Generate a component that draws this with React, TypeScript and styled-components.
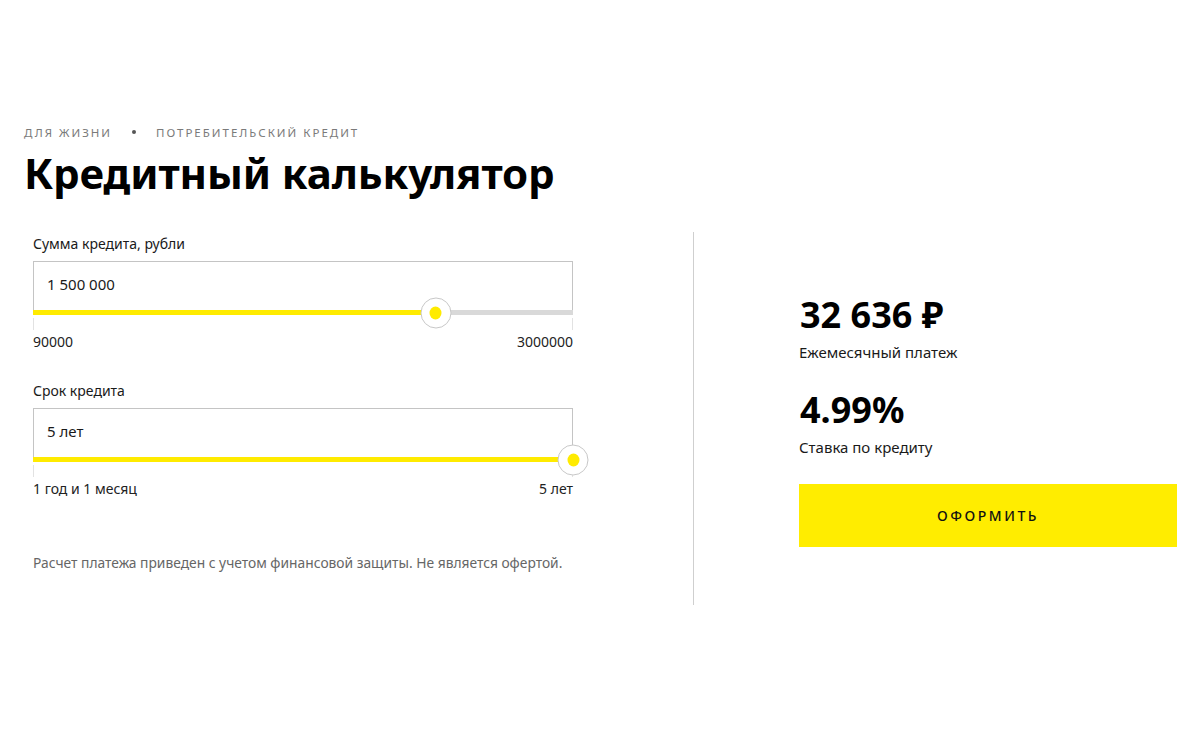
import React from "react";
import styled, { createGlobalStyle } from "styled-components";

const GlobalStyle = createGlobalStyle`
    html, body {
        margin: 0;
        padding: 0;
        background: #fff;
        font-family: "Noto Sans", "Open Sans", sans-serif;
        color: #111;
    }
`;

type SliderField = {
    label: string,
    value: string,
    min: string,
    max: string,
    fraction: number
};

const fields: SliderField[] = [
    { label: "Сумма кредита, рубли", value: "1 500 000", min: "90000", max: "3000000", fraction: 0.746 },
    { label: "Срок кредита", value: "5 лет", min: "1 год и 1 месяц", max: "5 лет", fraction: 1 }
];

export default () => {
    return (
        <Page>
            <GlobalStyle/>
            <Breadcrumbs>
                <Crumb>Для жизни</Crumb>
                <Dot/>
                <Crumb>Потребительский кредит</Crumb>
            </Breadcrumbs>
            <Title>Кредитный калькулятор</Title>
            <Main>
                <Form>
                    {fields.map(f => (
                        <Field key={f.label}>
                            <Label>{f.label}</Label>
                            <InputBox>
                                <Value>{f.value}</Value>
                                <Track>
                                    <Fill style={{ width: `${f.fraction * 100}%` }}/>
                                    <Thumb style={{ left: `${f.fraction * 100}%` }}>
                                        <ThumbDot/>
                                    </Thumb>
                                </Track>
                            </InputBox>
                            <Ticks/>
                            <Range>
                                <span>{f.min}</span>
                                <span>{f.max}</span>
                            </Range>
                        </Field>
                    ))}
                    <Note>Расчет платежа приведен с учетом финансовой защиты. Не является офертой.</Note>
                </Form>
                <Divider/>
                <Summary>
                    <Stat>
                        <BigNumber>32 636 ₽</BigNumber>
                        <Caption>Ежемесячный платеж</Caption>
                    </Stat>
                    <Stat>
                        <BigNumber>4.99%</BigNumber>
                        <Caption>Ставка по кредиту</Caption>
                    </Stat>
                    <ApplyButton>Оформить</ApplyButton>
                </Summary>
            </Main>
        </Page>
    );
};

const Page = styled.div`
    width: 1200px;
    height: 738px;
    box-sizing: border-box;
    padding: 125px 0 0 24px;
`;

const Breadcrumbs = styled.div`
    display: flex;
    align-items: center;
    gap: 20px;
    height: 14px;
`;

const Crumb = styled.span`
    font-size: 11.5px;
    letter-spacing: 2px;
    text-transform: uppercase;
    color: #7a7a7a;
`;

const Dot = styled.span`
    width: 4px;
    height: 4px;
    border-radius: 50%;
    background: #555;
`;

const Title = styled.h1`
    margin: 8px 0 0;
    font-size: 42px;
    line-height: 52px;
    font-weight: 700;
    color: #000;
    letter-spacing: -0.1px;
`;

const Main = styled.div`
    display: flex;
    align-items: stretch;
    margin: 33px 0 0 9px;
`;

const Form = styled.div`
    width: 540px;
    padding-top: 3px;
    display: flex;
    flex-direction: column;
`;

const Field = styled.div`
    display: flex;
    flex-direction: column;
    margin-bottom: 31px;
`;

const Label = styled.div`
    font-size: 14px;
    line-height: 18px;
    color: #1a1a1a;
    margin-bottom: 8px;
`;

const InputBox = styled.div`
    position: relative;
    height: 51px;
    border: 1px solid #c4c4c4;
    border-bottom: none;
    box-sizing: border-box;
    display: flex;
    align-items: center;
    padding: 0 13px 6px;
`;

const Value = styled.div`
    font-size: 15px;
    color: #1a1a1a;
`;

const Track = styled.div`
    position: absolute;
    left: -1px;
    right: -1px;
    bottom: -3px;
    height: 5px;
    background: #d9d9d9;
`;

const Fill = styled.div`
    height: 100%;
    background: #ffeb00;
`;

const Thumb = styled.div`
    position: absolute;
    top: 50%;
    width: 31px;
    height: 31px;
    box-sizing: border-box;
    border: 1px solid #c8c8c8;
    border-radius: 50%;
    background: #fff;
    transform: translate(-50%, -50%);
    display: flex;
    align-items: center;
    justify-content: center;
`;

const ThumbDot = styled.div`
    width: 12px;
    height: 13px;
    border-radius: 50%;
    background: #ffeb00;
`;

const Ticks = styled.div`
    height: 12px;
    margin-top: 6px;
    border-left: 1px solid #e2e2e2;
    border-right: 1px solid #e2e2e2;
`;

const Range = styled.div`
    display: flex;
    justify-content: space-between;
    font-size: 14px;
    line-height: 18px;
    color: #222;
    margin-top: 3px;
`;

const Note = styled.div`
    margin-top: 24px;
    font-size: 13.8px;
    color: #666;
`;

const Divider = styled.div`
    width: 1px;
    background: #cfcfcf;
    margin-left: 120px;
    height: 373px;
`;

const Summary = styled.div`
    width: 378px;
    margin-left: 105px;
    display: flex;
    flex-direction: column;
    justify-content: center;
    padding-top: 4px;
`;

const Stat = styled.div`
    display: flex;
    flex-direction: column;
    margin-bottom: 27px;
`;

const BigNumber = styled.div`
    font-size: 36px;
    line-height: 42px;
    font-weight: 700;
    color: #000;
    margin-left: 1px;
`;

const Caption = styled.div`
    font-size: 15px;
    line-height: 20px;
    color: #1a1a1a;
    margin-top: 6px;
`;

const ApplyButton = styled.button`
    height: 63px;
    border: none;
    background: #ffed00;
    font-family: inherit;
    font-size: 14px;
    font-weight: 500;
    letter-spacing: 2.5px;
    text-transform: uppercase;
    color: #111;
    margin-top: 0;
    cursor: pointer;
`;
